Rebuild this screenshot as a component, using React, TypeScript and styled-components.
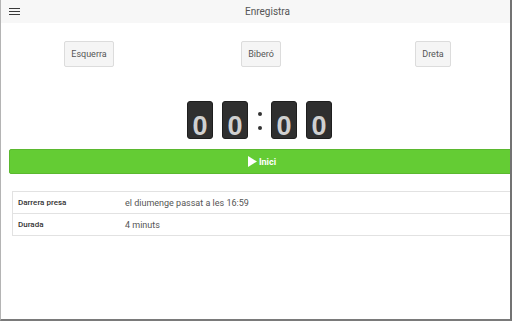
import React from "react";
import styled, { createGlobalStyle } from "styled-components";

const GlobalStyle = createGlobalStyle`
  html, body {
    margin: 0;
    padding: 0;
    background: #fff;
    font-family: Roboto, "Liberation Sans", Arial, sans-serif;
  }
`;

const Frame = styled.div`
  box-sizing: border-box;
  width: 512px;
  height: 321px;
  border-left: 1px solid #b4b4b4;
  border-right: 2px solid #737373;
  border-bottom: 2px solid #7a7a7a;
  overflow: hidden;
  background: #fff;
`;

const Header = styled.header`
  display: flex;
  align-items: center;
  height: 23px;
  background: #f7f7f7;
`;

const MenuButton = styled.div`
  width: 11px;
  padding: 0 0 0 8px;
  display: flex;
  flex-direction: column;
  gap: 2px;
  span {
    display: block;
    height: 1px;
    background: #3a3a3a;
  }
`;

const Title = styled.div`
  flex: 1;
  text-align: center;
  font-size: 10px;
  color: #555;
  padding-left: 5px;
`;

const Content = styled.main`
  width: 520px;
`;

const ChoiceRow = styled.div`
  display: grid;
  grid-template-columns: repeat(3, 172px);
  padding-left: 2px;
  margin-top: 18px;
`;

const ChoiceButton = styled.button`
  justify-self: center;
  height: 26px;
  padding: 0 6px;
  background: #f5f5f5;
  border: 1px solid #dcdcdc;
  border-radius: 2px;
  font-family: Roboto, "Liberation Sans", Arial, sans-serif;
  font-size: 9px;
  color: #555;
`;

const Timer = styled.div`
  display: flex;
  justify-content: center;
  margin-top: 34px;
  padding-right: 3px;
`;

const DigitPair = styled.div`
  display: flex;
  gap: 9px;
`;

const Digit = styled.div`
  box-sizing: border-box;
  width: 26px;
  height: 38px;
  background: #2f2f2f;
  border: 1px solid #1e1e1e;
  border-radius: 3px;
  color: #d0d0d0;
  font-family: "Liberation Sans", Arial, sans-serif;
  font-weight: bold;
  font-size: 27px;
  line-height: 1;
  text-align: center;
  padding-top: 11px;
`;

const Colon = styled.div`
  width: 23px;
  display: flex;
  flex-direction: column;
  align-items: center;
  justify-content: center;
  gap: 10px;
  padding-top: 2px;
  span {
    width: 4px;
    height: 4px;
    border-radius: 50%;
    background: #333;
  }
`;

const StartBar = styled.button`
  display: flex;
  align-items: center;
  justify-content: center;
  gap: 2px;
  margin: 10px 0 0 8px;
  width: 506px;
  height: 25px;
  background: #64cc34;
  border: 1px solid #5bb82f;
  border-radius: 2px;
  color: #fff;
  font-family: Roboto, "Liberation Sans", Arial, sans-serif;
  font-size: 9px;
  font-weight: bold;
`;

const InfoTable = styled.div`
  margin: 17px 0 0 11px;
  width: 503px;
  border: 1px solid #e2e2e2;
  border-right: none;
`;

const InfoRow = styled.div<{ $last?: boolean }>`
  display: grid;
  grid-template-columns: 107px 1fr;
  align-items: center;
  height: 21px;
  border-bottom: ${(p) => (p.$last ? "none" : "1px solid #e2e2e2")};
`;

const Label = styled.div`
  padding-left: 5px;
  font-size: 8px;
  font-weight: 500;
  color: #333;
`;

const Value = styled.div`
  padding-left: 5px;
  font-size: 9px;
  color: #555;
`;

const App = () => {
  return (
    <>
      <GlobalStyle />
      <Frame>
        <Header>
          <MenuButton>
            <span />
            <span />
            <span />
          </MenuButton>
          <Title>Enregistra</Title>
        </Header>
        <Content>
          <ChoiceRow>
            <ChoiceButton>Esquerra</ChoiceButton>
            <ChoiceButton>Biberó</ChoiceButton>
            <ChoiceButton>Dreta</ChoiceButton>
          </ChoiceRow>
          <Timer>
            <DigitPair>
              <Digit>0</Digit>
              <Digit>0</Digit>
            </DigitPair>
            <Colon>
              <span />
              <span />
            </Colon>
            <DigitPair>
              <Digit>0</Digit>
              <Digit>0</Digit>
            </DigitPair>
          </Timer>
          <StartBar>
            <svg width="9" height="11" viewBox="0 0 9 11">
              <path d="M0 0 L9 5.5 L0 11 Z" fill="#fff" />
            </svg>
            Inici
          </StartBar>
          <InfoTable>
            <InfoRow>
              <Label>Darrera presa</Label>
              <Value>el diumenge passat a les 16:59</Value>
            </InfoRow>
            <InfoRow $last>
              <Label>Durada</Label>
              <Value>4 minuts</Value>
            </InfoRow>
          </InfoTable>
        </Content>
      </Frame>
    </>
  );
};

export default App;
